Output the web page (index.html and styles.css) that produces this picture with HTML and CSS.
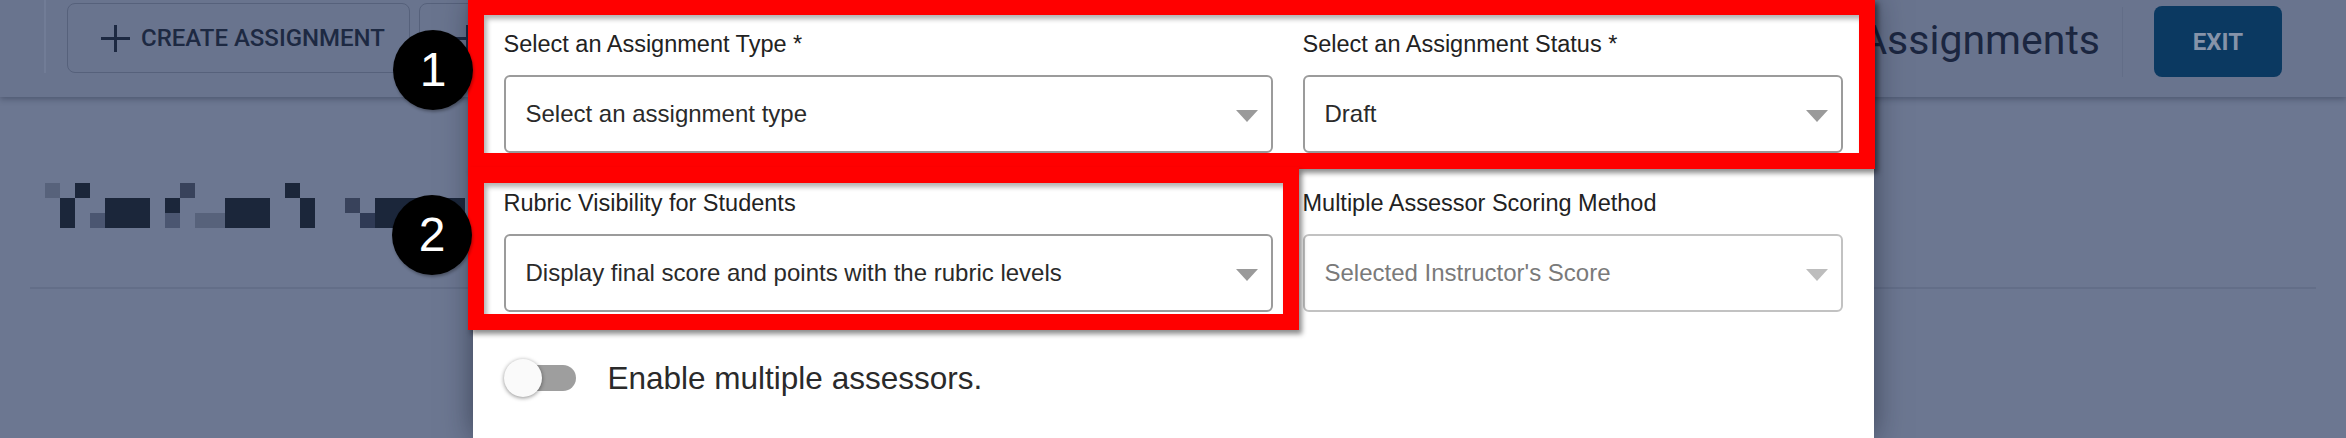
FILE: index.html
```html
<!DOCTYPE html>
<html lang="en">
<head>
<meta charset="utf-8">
<title>Assignments</title>
<link rel="stylesheet" href="styles.css">
</head>
<body>
<div class="page">
  <header class="topbar">
    <div class="bar-left">
      <span class="edge-line"></span>
      <button class="outline-btn">
        <svg class="plus" viewBox="0 0 29 27" width="29" height="27"><path d="M14.5 0v27M0 13.5h29" stroke="currentColor" stroke-width="3" fill="none"/></svg>
        <span>CREATE ASSIGNMENT</span>
      </button>
      <button class="outline-btn icon-only" aria-label="Add">
        <svg class="plus" viewBox="0 0 29 27" width="29" height="27"><path d="M14.5 0v27M0 13.5h29" stroke="currentColor" stroke-width="3" fill="none"/></svg>
      </button>
    </div>
    <div class="bar-right">
      <h1 class="title">Assignments</h1>
      <span class="bar-divider"></span>
      <button class="exit-btn">EXIT</button>
    </div>
  </header>
  <main class="content">
    <svg class="blurred-title" width="420" height="45" viewBox="0 0 420 45">
      <rect x="0" y="0" width="15" height="15" fill="#57627b"/>
      <rect x="30" y="0" width="15" height="15" fill="#1b263a"/>
      <rect x="135" y="0" width="15" height="15" fill="#38425b"/>
      <rect x="240" y="0" width="15" height="15" fill="#1b263a"/>
      <rect x="15" y="15" width="15" height="15" fill="#1b263a"/>
      <rect x="60" y="15" width="45" height="15" fill="#1b263a"/>
      <rect x="120" y="15" width="15" height="15" fill="#1b263a"/>
      <rect x="180" y="15" width="45" height="15" fill="#1b263a"/>
      <rect x="255" y="15" width="15" height="15" fill="#1b263a"/>
      <rect x="300" y="15" width="15" height="15" fill="#38425b"/>
      <rect x="330" y="15" width="30" height="15" fill="#1b263a"/>
      <rect x="15" y="30" width="15" height="15" fill="#1b263a"/>
      <rect x="45" y="30" width="15" height="15" fill="#4b5671"/>
      <rect x="60" y="30" width="45" height="15" fill="#1b263a"/>
      <rect x="120" y="30" width="15" height="15" fill="#4b5671"/>
      <rect x="150" y="30" width="30" height="15" fill="#57627b"/>
      <rect x="180" y="30" width="45" height="15" fill="#1b263a"/>
      <rect x="255" y="30" width="15" height="15" fill="#1b263a"/>
      <rect x="315" y="30" width="15" height="15" fill="#2f3a55"/>
      <rect x="330" y="30" width="30" height="15" fill="#1b263a"/>
      <rect x="360" y="15" width="60" height="30" fill="#1b263a"/>
    </svg>
    <div class="rule"></div>
  </main>
</div>

<div class="overlay">
  <div class="modal">
    <div class="form-grid">
      <div class="field">
        <label class="field-label">Select an Assignment Type *</label>
        <div class="select"><span>Select an assignment type</span><i class="caret"></i></div>
      </div>
      <div class="field">
        <label class="field-label">Select an Assignment Status *</label>
        <div class="select"><span>Draft</span><i class="caret"></i></div>
      </div>
      <div class="field">
        <label class="field-label">Rubric Visibility for Students</label>
        <div class="select"><span>Display final score and points with the rubric levels</span><i class="caret"></i></div>
      </div>
      <div class="field">
        <label class="field-label">Multiple Assessor Scoring Method</label>
        <div class="select disabled"><span>Selected Instructor's Score</span><i class="caret"></i></div>
      </div>
    </div>
    <div class="toggle-row">
      <span class="switch"><span class="track"></span><span class="knob"></span></span>
      <span class="toggle-text">Enable multiple assessors.</span>
    </div>
  </div>
</div>

<div class="annot annot-1"></div>
<div class="annot annot-2"></div>
<div class="badge badge-1">1</div>
<div class="badge badge-2">2</div>
</body>
</html>
```

FILE: styles.css
```css
html, body {
  margin: 0;
  padding: 0;
}
body {
  width: 2346px;
  height: 438px;
  overflow: hidden;
  position: relative;
  background: #6c7791;
  font-family: "Liberation Sans", Arial, sans-serif;
}
.page {
  height: 438px;
}
.topbar {
  height: 97px;
  box-sizing: border-box;
  display: flex;
  justify-content: space-between;
  align-items: flex-start;
  background: #69748e;
  box-shadow: 0 2px 6px rgba(20, 28, 48, 0.35);
  position: relative;
}
.bar-left {
  display: flex;
  align-items: flex-start;
  padding-top: 3px;
}
.edge-line {
  width: 2px;
  height: 73px;
  margin-left: 44px;
  margin-top: -3px;
  background: #717c96;
}
.outline-btn {
  height: 70px;
  box-sizing: border-box;
  display: flex;
  align-items: center;
  gap: 11px;
  padding: 0 24px 0 33px;
  margin-left: 21px;
  border: 1.5px solid #56617b;
  border-radius: 8px;
  background: transparent;
  color: #1d2942;
  font-family: Roboto, "Liberation Sans", sans-serif;
  font-weight: 500;
  font-size: 24px;
  letter-spacing: 0;
}
.outline-btn.icon-only {
  margin-left: 9px;
  width: 120px;
}
.plus {
  display: block;
  flex: none;
}
.bar-right {
  display: flex;
  align-items: flex-start;
  padding-right: 64px;
}
.title {
  margin: 16px 22px 0 0;
  font-family: Roboto, "Liberation Sans", sans-serif;
  font-weight: 400;
  font-size: 41px;
  line-height: 48px;
  color: #1b2640;
}
.bar-divider {
  width: 1px;
  height: 70px;
  margin-top: 7px;
  background: #626d87;
}
.exit-btn {
  width: 128px;
  height: 71px;
  margin: 6px 0 0 31px;
  border: none;
  border-radius: 8px;
  background: #0b3961;
  color: #8693a9;
  font-family: Roboto, "Liberation Sans", sans-serif;
  font-weight: 700;
  font-size: 24px;
}
.content {
  padding: 86px 30px 0;
}
.blurred-title {
  display: block;
  margin-left: 15px;
}
.rule {
  margin-top: 59px;
  height: 2px;
  background: #636e88;
}

/* modal */
.overlay {
  position: absolute;
  inset: 0;
  display: flex;
  justify-content: center;
}
.modal {
  width: 1401px;
  height: 438px;
  box-sizing: border-box;
  padding: 31px 30px 0 31px;
  background: #ffffff;
  box-shadow: 0 0 28px rgba(20, 25, 40, 0.55);
}
.form-grid {
  display: grid;
  grid-template-columns: 769px 540px;
  column-gap: 30px;
  row-gap: 37px;
}
.field-label {
  display: block;
  font-size: 23.5px;
  line-height: 27px;
  color: #222222;
  margin-bottom: 17px;
}
.select {
  height: 78px;
  box-sizing: border-box;
  border: 2px solid #9b9b9b;
  border-radius: 6px;
  padding: 0 13px 0 20px;
  display: flex;
  align-items: center;
  justify-content: space-between;
  font-size: 24px;
  color: #2a2a2a;
}
.caret {
  width: 0;
  height: 0;
  margin-top: 4px;
  border-left: 11px solid transparent;
  border-right: 11px solid transparent;
  border-top: 12px solid #9a9a9a;
}
.select.disabled {
  border-color: #c2c2c2;
  color: #7a7a7a;
}
.select.disabled .caret {
  border-top-color: #bdbdbd;
}
.toggle-row {
  margin-top: 46px;
  display: flex;
  align-items: center;
  height: 40px;
}
.switch {
  position: relative;
  width: 72px;
  height: 38px;
  display: flex;
  align-items: center;
}
.track {
  margin-left: 10px;
  width: 62px;
  height: 26px;
  border-radius: 13px;
  background: #9e9e9e;
}
.knob {
  position: absolute;
  left: 0;
  top: 0;
  width: 38px;
  height: 38px;
  border-radius: 50%;
  background: #fafafa;
  box-shadow: 0 1px 4px rgba(0, 0, 0, 0.45);
}
.toggle-text {
  margin-left: 32px;
  font-size: 31.5px;
  color: #2a2a2a;
}

/* annotations */
.annot {
  position: absolute;
  box-sizing: border-box;
  border: 16px solid #ff0000;
  box-shadow: 3px 4px 5px rgba(0, 0, 0, 0.45), inset 3px 4px 5px rgba(0, 0, 0, 0.3);
}
.annot-1 {
  left: 468px;
  top: -1px;
  width: 1407px;
  height: 170px;
}
.annot-2 {
  left: 468px;
  top: 167px;
  width: 831px;
  height: 163px;
}
.badge {
  position: absolute;
  width: 80px;
  height: 80px;
  border-radius: 50%;
  background: #000;
  color: #fff;
  display: flex;
  align-items: center;
  justify-content: center;
  font-family: "Liberation Sans", Arial, sans-serif;
  font-size: 48px;
  line-height: 1;
  box-shadow: 1px 2px 3px rgba(0, 0, 0, 0.3);
}
.badge-1 {
  left: 393px;
  top: 30px;
}
.badge-2 {
  left: 392px;
  top: 195px;
}
```
